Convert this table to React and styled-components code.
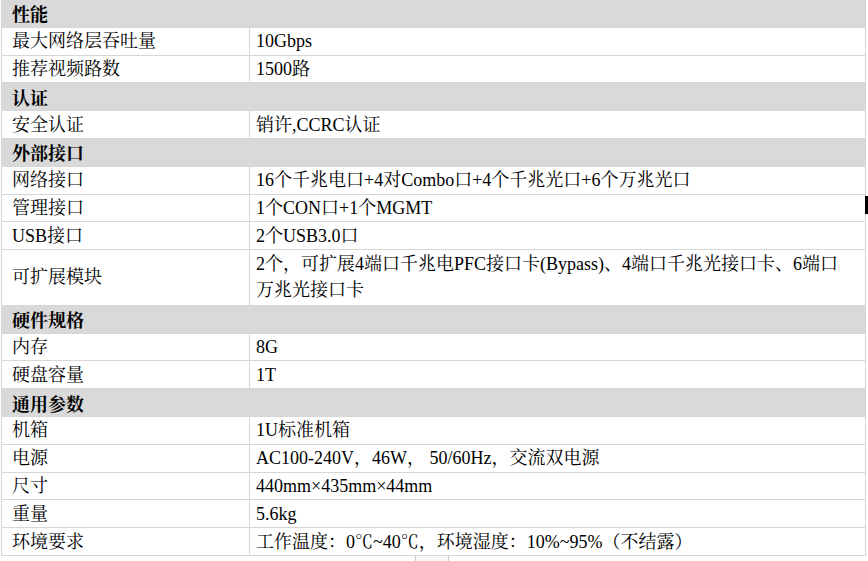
import React from "react";
import styled, { createGlobalStyle } from "styled-components";

const GlobalStyle = createGlobalStyle`
  body {
    margin: 0;
    background: #fff;
    font-family: "Liberation Serif", "Noto Serif CJK SC", "Noto Sans CJK SC", serif;
    color: #000;
  }
`;

const Page = styled.div`
  position: relative;
  width: 868px;
  height: 561px;
  overflow: hidden;
`;

const Sheet = styled.div`
  box-sizing: border-box;
  width: 865px;
  margin-left: 1px;
  border-left: 1px solid #d6d6d6;
  border-right: 1px solid #d6d6d6;
  display: grid;
  grid-template-columns: 248px 1fr;
  font-size: 18px;
`;

const Section = styled.div`
  grid-column: 1 / -1;
  box-sizing: border-box;
  height: 27.8px;
  display: flex;
  align-items: center;
  padding-left: 10px;
  background: #d9d9d9;
  font-weight: bold;
  border-bottom: 1px solid #d6d6d6;
`;

const Cell = styled.div`
  box-sizing: border-box;
  height: ${(p) => (p.$tall ? 55.6 : 27.8)}px;
  display: flex;
  align-items: center;
  border-bottom: 1px solid #d6d6d6;
  line-height: 26px;
  white-space: nowrap;
`;

const Label = styled(Cell)`
  padding-left: 10px;
  border-right: 1px solid #d6d6d6;
`;

const Value = styled(Cell)`
  padding-left: 6px;
`;

const Caret = styled.span`
  position: absolute;
  left: 865px;
  top: 196px;
  width: 3px;
  height: 18px;
  background: #000;
`;

const Handle = styled.div`
  box-sizing: border-box;
  width: 34px;
  height: 5px;
  margin-left: 415px;
  border-left: 1px solid #c8c8c8;
  border-right: 1px solid #c8c8c8;
  background: #f7f7f7;
`;

const specs = [
  { title: "性能", rows: [["最大网络层吞吐量", "10Gbps"], ["推荐视频路数", "1500路"]] },
  { title: "认证", rows: [["安全认证", "销许,CCRC认证"]] },
  {
    title: "外部接口",
    rows: [
      ["网络接口", "16个千兆电口+4对Combo口+4个千兆光口+6个万兆光口"],
      ["管理接口", "1个CON口+1个MGMT"],
      ["USB接口", "2个USB3.0口"],
      [
        "可扩展模块",
        ["2个，可扩展4端口千兆电PFC接口卡(Bypass)、4端口千兆光接口卡、6端口", "万兆光接口卡"],
      ],
    ],
  },
  { title: "硬件规格", rows: [["内存", "8G"], ["硬盘容量", "1T"]] },
  {
    title: "通用参数",
    rows: [
      ["机箱", "1U标准机箱"],
      ["电源", "AC100-240V，46W， 50/60Hz，交流双电源"],
      ["尺寸", "440mm×435mm×44mm"],
      ["重量", "5.6kg"],
      ["环境要求", "工作温度：0℃~40℃，环境湿度：10%~95%（不结露）"],
    ],
  },
];

export default function App() {
  return (
    <Page>
      <GlobalStyle />
      <Sheet>
        {specs.map((s) => (
          <React.Fragment key={s.title}>
            <Section>{s.title}</Section>
            {s.rows.map(([k, v]) => {
              const tall = Array.isArray(v);
              return (
                <React.Fragment key={k}>
                  <Label $tall={tall}>{k}</Label>
                  <Value $tall={tall}>
                    {tall ? (
                      <span>
                        {v[0]}
                        <br />
                        {v[1]}
                      </span>
                    ) : (
                      v
                    )}
                  </Value>
                </React.Fragment>
              );
            })}
          </React.Fragment>
        ))}
      </Sheet>
      <Handle />
      <Caret />
    </Page>
  );
}
